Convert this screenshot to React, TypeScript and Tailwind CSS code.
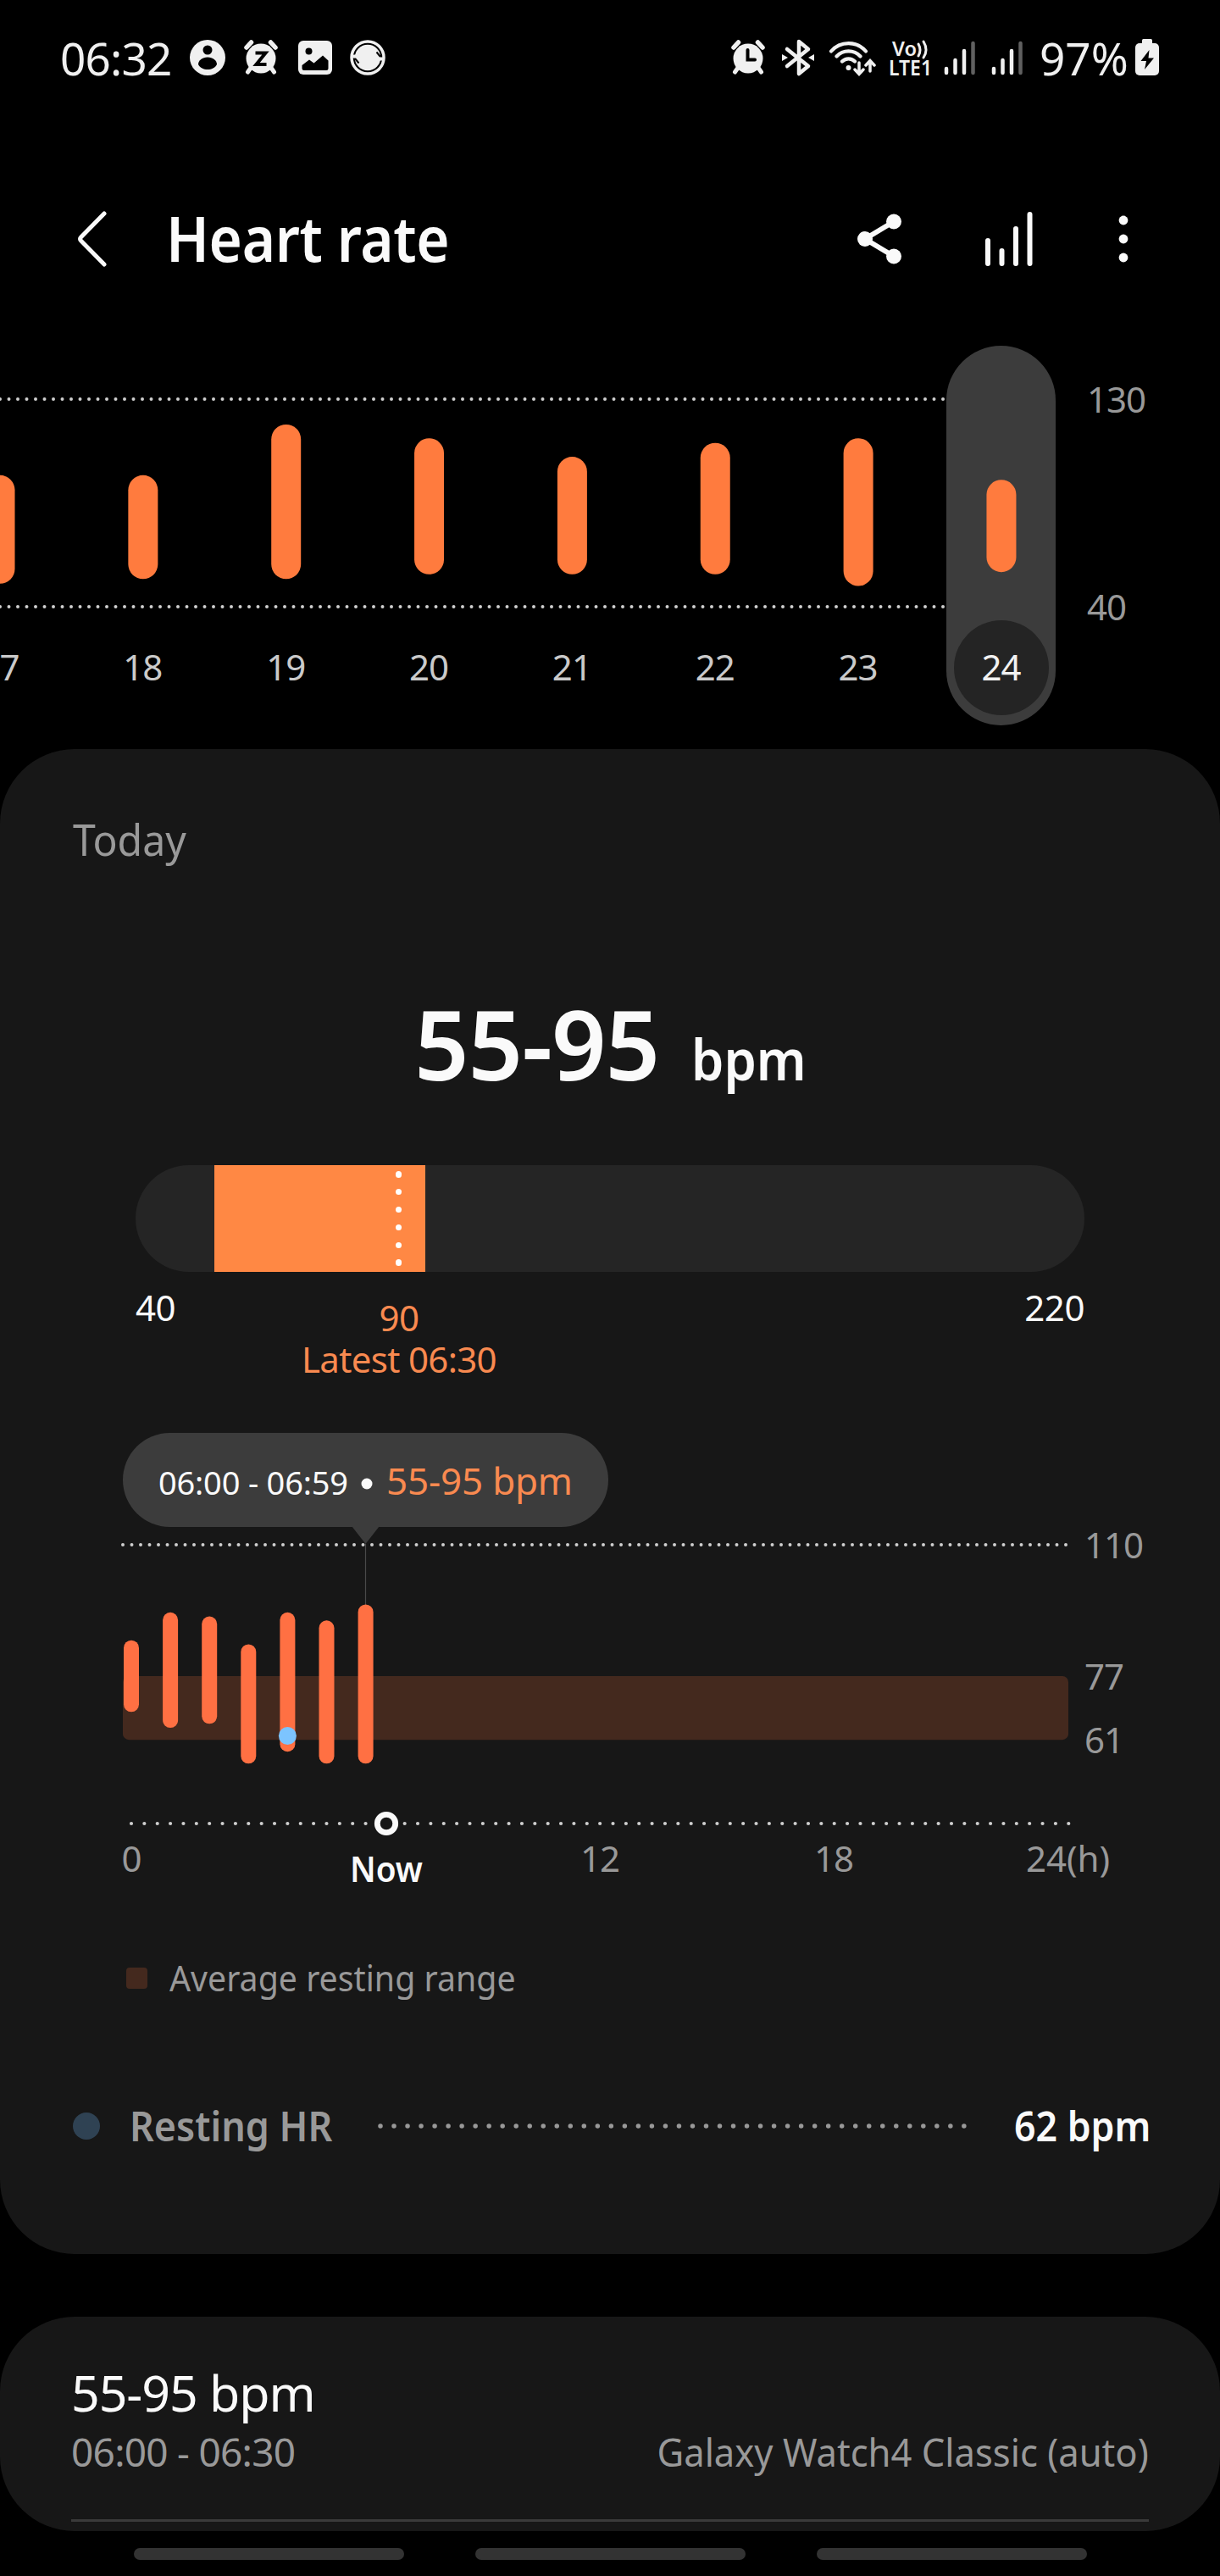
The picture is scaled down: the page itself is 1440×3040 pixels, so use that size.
import type { ReactNode } from "react";

interface Range {
  label: string;
  low: number;
  high: number;
}

const WEEK: Range[] = [
  { label: "17", low: 50, high: 97 },
  { label: "18", low: 52, high: 97 },
  { label: "19", low: 52, high: 119 },
  { label: "20", low: 54, high: 113 },
  { label: "21", low: 54, high: 105 },
  { label: "22", low: 54, high: 111 },
  { label: "23", low: 49, high: 113 },
  { label: "24", low: 55, high: 95 },
];

const HOURS = [
  { low: 68, high: 86 },
  { low: 64, high: 93 },
  { low: 65, high: 92 },
  { low: 55, high: 85 },
  { low: 58, high: 93 },
  { low: 55, high: 91 },
  { low: 55, high: 95 },
];

const weekX = (i: number) => i * 168.85;
const weekY = (bpm: number) => 63 + (130 - bpm) * 2.722;
const hourX = (h: number) => 155 + h * 46.1;
const hourY = (bpm: number) => 143 + (110 - bpm) * 4.697;

function Icon({ w, h, className, children }: { w: number; h: number; className?: string; children: ReactNode }) {
  return (
    <svg width={w} height={h} viewBox={`0 0 ${w} ${h}`} fill="none" className={`shrink-0 overflow-visible ${className ?? ""}`}>
      {children}
    </svg>
  );
}

function AlarmBody() {
  return (
    <>
      <path d="M3 9 8.500 3M37 9 31.500 3" stroke="#f0f0f0" strokeWidth="5.500" strokeLinecap="round" />
      <path d="M8 33 4.500 38M32 33 35.500 38" stroke="#f0f0f0" strokeWidth="5" strokeLinecap="round" />
      <circle cx="20" cy="22" r="17.500" fill="#f0f0f0" />
    </>
  );
}

function SignalIcon({ className }: { className?: string }) {
  return (
    <Icon w={38} h={42} className={className}>
      <g stroke="#f0f0f0" strokeWidth="4.500" strokeLinecap="round">
        <path d="M3 34v5M13.500 24v15M24 13v26" />
        <path d="M34.500 4v35" stroke="#606060" />
      </g>
    </Icon>
  );
}

function StatusBar() {
  return (
    <div className="flex h-[136px] items-center pr-[72px] pl-[71px] text-[#f0f0f0]">
      <span className="w-[153px] text-[53px] leading-none tracking-[-0.015em]">06:32</span>
      <Icon w={42} h={42}>
        <circle cx="21" cy="21" r="21" fill="#f0f0f0" />
        <circle cx="21" cy="12" r="5.500" fill="#000" />
        <path d="M10 29c0-4.500 5-8.500 11-8.500s11 4 11 8.500c-2 4-6.500 6-11 6s-9-2-11-6Z" fill="#000" />
      </Icon>
      <Icon w={40} h={42} className="ml-[22px]">
        <AlarmBody />
        <path d="M13.500 15.500h12L14.500 29h12" stroke="#000" strokeWidth="4" />
      </Icon>
      <Icon w={40} h={40} className="ml-[24px]">
        <rect width="40" height="40" rx="6" fill="#f0f0f0" />
        <circle cx="12.500" cy="12.500" r="4" fill="#000" />
        <path d="M4.500 29 13 22.500l5.500 4 10.500-9 6.500 6v9q0 2.500-2.500 2.500H7q-2.500 0-2.500-2.500Z" fill="#000" />
      </Icon>
      <Icon w={42} h={42} className="ml-[21px]">
        <circle cx="21" cy="21" r="19" stroke="#f0f0f0" strokeWidth="3.500" />
        <circle cx="21" cy="21" r="15.200" fill="#f0f0f0" />
        <path d="M2 17.500h6v4H2zM40 20.500h-6v4h6z" fill="#f0f0f0" />
        <path d="m6 22 4.500 5.500M36 20l-4.500-5.500" stroke="#000" strokeWidth="2" />
      </Icon>

      <Icon w={40} h={42} className="ml-auto">
        <AlarmBody />
        <path d="M19.500 12v11.500H28" stroke="#000" strokeWidth="4" strokeLinecap="round" />
      </Icon>
      <Icon w={38} h={44} className="ml-[20px]">
        <path d="m6 12 25 20-11 9V3l11 9L6 32" stroke="#f0f0f0" strokeWidth="4.500" strokeLinejoin="round" strokeLinecap="round" />
        <path d="M0 18v8l7-4zM38 18v8l-7-4z" fill="#f0f0f0" />
      </Icon>
      <Icon w={56} h={44} className="ml-[17px]">
        <g stroke="#f0f0f0" strokeWidth="4.200" strokeLinecap="round">
          <path d="M3 14.500a27 27 0 0 1 41 0M9.500 20.500a19 19 0 0 1 28 0M16 26.500a10.500 10.500 0 0 1 15 0" />
          <path d="M36 28v13m-5-5 5 5.500 5-5.500M49 38V26m-5 5 5-5.500 5 5.500" strokeWidth="3.500" />
        </g>
        <circle cx="23.500" cy="34" r="3" fill="#f0f0f0" />
      </Icon>
      <Icon w={52} h={44} className="ml-[15px]">
        <text x="4" y="19.500" fontSize="24" fontWeight="600" textLength="29" lengthAdjust="spacingAndGlyphs" fill="#f0f0f0">
          Vo
        </text>
        <path d="M35 6q4 7 0 14M41 3q6 10 0 19" stroke="#f0f0f0" strokeWidth="3" strokeLinecap="round" />
        <text x="0" y="43" fontSize="25" fontWeight="600" textLength="51" lengthAdjust="spacingAndGlyphs" fill="#f0f0f0">
          LTE1
        </text>
      </Icon>
      <SignalIcon className="ml-[13px]" />
      <SignalIcon className="ml-[18px]" />
      <span className="ml-[19px] w-[113px] text-[53px] leading-none">97%</span>
      <Icon w={28} h={44}>
        <path d="M8 1.500Q8 0 9.500 0h9Q20 0 20 1.500V5H8z" fill="#f0f0f0" />
        <rect y="5" width="28" height="38" rx="5" fill="#f0f0f0" />
        <path d="M16.500 13 6.500 26h6.500L11 36l11-13.500h-6.500z" fill="#000" />
      </Icon>
    </div>
  );
}

function Header() {
  return (
    <div className="flex h-[272px] items-center pt-[20px] pr-[108px] pl-[90px]">
      <Icon w={36} h={66}>
        <path d="M33 3 5.500 31q-2 2 0 4L33 63" stroke="#fafafa" strokeWidth="5" strokeLinecap="round" />
      </Icon>
      <h1 className="ml-[70px] origin-left scale-x-[0.91] pb-[2px] text-[74px] leading-none font-semibold tracking-[-0.005em] text-[#fafafa]">
        Heart rate
      </h1>
      <Icon w={54} h={60} className="ml-auto">
        <path d="M43 9.500 9 30l34 20.500" stroke="#fafafa" strokeWidth="6" />
        <circle cx="43" cy="9.500" r="9" fill="#fafafa" />
        <circle cx="9" cy="30" r="9" fill="#fafafa" />
        <circle cx="43" cy="50.500" r="9" fill="#fafafa" />
      </Icon>
      <Icon w={58} h={66} className="ml-[96px]">
        <path d="M4 35v27M20.500 47v15M37 21v41M53.500 4v58" stroke="#fafafa" strokeWidth="6" strokeLinecap="round" />
      </Icon>
      <Icon w={12} h={56} className="ml-[100px]">
        <circle cx="6" cy="6" r="5.400" fill="#fafafa" />
        <circle cx="6" cy="28" r="5.400" fill="#fafafa" />
        <circle cx="6" cy="50" r="5.400" fill="#fafafa" />
      </Icon>
    </div>
  );
}

function WeekChart() {
  return (
    <svg width="1440" height="476" viewBox="0 0 1440 476" className="block shrink-0" fontSize="42">
      {[130, 40].map((v) => (
        <line
          key={v}
          x1="0"
          x2="1117"
          y1={weekY(v)}
          y2={weekY(v)}
          stroke="#cfcfcf"
          strokeWidth="4"
          strokeLinecap="round"
          strokeDasharray="0 10.5"
        />
      ))}
      <rect x="1117" y="0" width="129" height="448" rx="64.500" fill="#3c3c3c" />
      <circle cx="1182" cy="380" r="56" fill="#242424" />
      {WEEK.map((d, i) => (
        <g key={d.label}>
          <rect
            x={weekX(i) - 17.5}
            y={weekY(d.high)}
            width="35"
            height={weekY(d.low) - weekY(d.high)}
            rx="17.5"
            fill="#ff7b3e"
          />
          <text x={weekX(i) - 0.5} y="395" textAnchor="middle" letterSpacing="-1" fill={i === 7 ? "#f2f2f2" : "#cacaca"}>
            {d.label}
          </text>
        </g>
      ))}
      <text x="1283" y="79" letterSpacing="-1" fill="#999">130</text>
      <text x="1283" y="324" letterSpacing="-1" fill="#999">40</text>
    </svg>
  );
}

function RangeBar() {
  return (
    <div className="mt-[84px] pr-[160px] pl-[160px]">
      <div className="h-[126px] overflow-hidden rounded-full bg-[#252525] pl-[93px]">
        <div className="flex h-full w-[249px] flex-col items-end justify-between bg-[#ff8844] py-[7px] pr-[28px]">
          {Array.from({ length: 6 }).map((_, i) => (
            <span key={i} className="size-[7.5px] rounded-full bg-white" />
          ))}
        </div>
      </div>
      <div className="flex text-[42px] leading-[49px] tracking-[-0.01em] text-[#fafafa]">
        <span className="w-[193px] pt-[17px]">40</span>
        <div className="flex w-[236px] flex-col items-center pt-[29px] whitespace-nowrap text-[#f98a50]">
          <span>90</span>
          <span className="tracking-[-0.016em]">Latest 06:30</span>
        </div>
        <span className="ml-auto pt-[17px]">220</span>
      </div>
    </div>
  );
}

function DayChart() {
  return (
    <svg width="1440" height="560" viewBox="0 0 1440 560" className="mt-[52px] block shrink-0" fontSize="42">
      <line x1="145" x2="1260" y1="143" y2="143" stroke="#cfcfcf" strokeWidth="4" strokeLinecap="round" strokeDasharray="0 10.5" />
      <rect x="145" y={hourY(77)} width="1116" height={hourY(61) - hourY(77)} rx="7" fill="#44291e" />

      <rect x="145" y="11" width="573" height="111" rx="55.500" fill="#3c3c3c" />
      <path d="M415.500 121.500h32l-16 20.500z" fill="#3c3c3c" />
      <path d="M431.500 142v72" stroke="#4a4a4a" strokeWidth="1.200" />
      <text x="187" y="84" fontSize="38" textLength="224" fill="#fafafa">06:00 - 06:59</text>
      <circle cx="433" cy="71" r="6.500" fill="#fafafa" />
      <text x="456" y="84" fontSize="44" textLength="220" fill="#f98a50">55-95 bpm</text>

      {HOURS.map((d, h) => (
        <rect
          key={h}
          x={hourX(h) - 9}
          y={hourY(d.high)}
          width="18"
          height={hourY(d.low) - hourY(d.high)}
          rx="9"
          fill="#ff7043"
        />
      ))}
      <circle cx={hourX(4)} cy={hourY(62)} r="10.500" fill="#7cc4ff" />

      <line x1="155" x2="1262" y1="472" y2="472" stroke="#cfcfcf" strokeWidth="4.200" strokeLinecap="round" strokeDasharray="0 15.365" />
      <circle cx="456" cy="472" r="10.700" fill="#171717" stroke="#fafafa" strokeWidth="6.800" />

      <g fill="#999" letterSpacing="-1">
        <text x="1280" y="159">110</text>
        <text x="1280" y="314">77</text>
        <text x="1280" y="389">61</text>
        <text x="155" y="529" textAnchor="middle">0</text>
        <text x="708" y="529" textAnchor="middle">12</text>
        <text x="984" y="529" textAnchor="middle">18</text>
        <text x="1211" y="529" textLength="98">24(h)</text>
      </g>
      <text x="413" y="541" textLength="86" lengthAdjust="spacingAndGlyphs" fontWeight="600" fill="#fafafa">Now</text>
    </svg>
  );
}

function TodayCard() {
  return (
    <section className="flex h-[1776px] shrink-0 flex-col rounded-[88px] bg-[#171717] pt-[71px]">
      <h2 className="origin-left scale-x-[0.945] pl-[91px] text-[51px] leading-[70px] text-[#999]">Today</h2>
      <div className="mt-[146px] flex h-[120px] items-baseline justify-center pl-[11px] font-semibold text-[#fafafa]">
        <span className="text-[113px] leading-[120px] tracking-[-0.01em]">55-95</span>
        <span className="ml-[38px] origin-left scale-x-[0.93] text-[66px] leading-[80px]">bpm</span>
      </div>
      <RangeBar />
      <DayChart />
      <div className="mt-[64px] flex h-[60px] items-center pl-[149px]">
        <span className="size-[25px] rounded-[4px] bg-[#44291e]" />
        <span className="ml-[26px] origin-left scale-x-[0.935] text-[42px] leading-none text-[#999]">
          Average resting range
        </span>
      </div>
      <div className="mt-[115px] flex h-[60px] items-center pr-[83px] pl-[86px] text-[48px] leading-none font-semibold">
        <span className="size-[32px] rounded-full bg-[#2f4253]" />
        <span className="ml-[35px] origin-left scale-x-[0.935] text-[#999]">Resting HR</span>
        <svg width="696" height="6" viewBox="0 0 696 6" className="ml-auto">
          <line x1="3" x2="693" y1="3" y2="3" stroke="#999" strokeWidth="5.500" strokeLinecap="round" strokeDasharray="0 16.02" />
        </svg>
        <span className="ml-[55px] w-[160px] origin-left scale-x-[0.93] whitespace-nowrap text-[#fafafa]">62 bpm</span>
      </div>
    </section>
  );
}

function RecordCard() {
  return (
    <section className="mt-[74px] h-[253px] shrink-0 rounded-[88px] bg-[#171717] px-[84px] pt-[49px]">
      <div className="text-[59px] leading-[80px] tracking-[-0.018em] text-[#fafafa]">55-95 bpm</div>
      <div className="flex justify-between text-[46px] leading-[60px] text-[#999]">
        <span className="tracking-[-0.016em]">06:00 - 06:30</span>
        <span className="origin-right scale-x-[0.947]">Galaxy Watch4 Classic (auto)</span>
      </div>
      <div className="mt-[50px] h-[3px] bg-[#3a3a3a]" />
    </section>
  );
}

export default function App() {
  return (
    <main className="flex h-[3040px] w-[1440px] flex-col overflow-hidden bg-black font-['Noto_Sans',sans-serif]">
      <StatusBar />
      <Header />
      <WeekChart />
      <TodayCard />
      <RecordCard />
      <div className="flex gap-[84px] pt-[20px] pl-[158px]">
        <span className="h-[14px] w-[319px] rounded-full bg-[#333]" />
        <span className="h-[14px] w-[319px] rounded-full bg-[#333]" />
        <span className="h-[14px] w-[319px] rounded-full bg-[#333]" />
      </div>
    </main>
  );
}
